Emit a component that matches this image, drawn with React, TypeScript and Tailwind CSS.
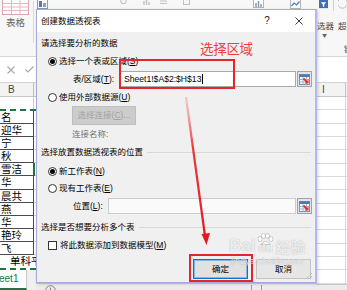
import React from "react";

function Radio({ checked }: { checked?: boolean }) {
  return (
    <span className="w-[9px] h-[9px] shrink-0 rounded-full border border-[#333] bg-white flex items-center justify-center">
      {checked && <span className="w-[5px] h-[5px] rounded-full bg-black" />}
    </span>
  );
}

function RangeBtn() {
  return (
    <div className="w-[15px] h-[16px] shrink-0 border border-[#a3a3a3] bg-[#e4e4e4] flex items-center justify-center">
      <svg width="11" height="11" viewBox="0 0 11 11">
        <rect x="0.5" y="0.5" width="10" height="10" fill="#fff" stroke="#6f8fb8" />
        <path d="M0.5 5.5H10.5M0.5 8H10.5M4 0.5V10.5M7.5 0.5V10.5" stroke="#9db3d1" strokeWidth="1" />
        <rect x="0.5" y="0.5" width="10" height="2.5" fill="#4a78b5" />
        <path d="M4.5 4.5 L8 8" stroke="#d9362b" strokeWidth="1.8" />
        <path d="M5.5 9.5 L9.5 9.5 L9.5 5.5 Z" fill="#d9362b" />
      </svg>
    </div>
  );
}

function SectionLabel({ text }: { text: string }) {
  return (
    <div className="flex items-center pl-[4px] pr-[4px]">
      <span className="leading-none whitespace-nowrap">{text}</span>
      <span className="flex-1 h-px bg-[#d9d9d9] ml-[4px]" />
    </div>
  );
}

function LeftStrip() {
  const names = ["名", "迎华", "宁", "秋", "雪洁", "华", "晨共", "燕", "华", "艳玲", "飞"];
  return (
    <div className="w-[36px] shrink-0 flex flex-col">
      <div className="h-[57px] shrink-0 bg-[#f7f7f7] border-b border-[#d6d6d6] flex">
        <div className="w-[31px] flex flex-col items-center">
          <svg width="27" height="15" viewBox="0 0 27 15">
            <rect x="0.5" y="-1" width="26" height="15.5" fill="#fff" stroke="#d6a7ae" />
            <path d="M0.5 3.5H26.5M0.5 7H26.5M0.5 10.5H26.5M9.5 -1V14.5M18 -1V14.5" stroke="#e0b9bf" />
          </svg>
          <span className="mt-[3px] text-[9.5px] leading-none text-[#666] font-['Noto_Sans_CJK_SC',sans-serif]">表格</span>
        </div>
        <div className="w-px h-[42px] bg-[#d8d8d8] ml-[2px] mt-[1px]" />
      </div>
      <div className="h-[26px] shrink-0 bg-white flex items-center border-b border-[#d4d4d4]">
        <svg className="ml-[7px]" width="8" height="8" viewBox="0 0 8 8">
          <path d="M0.5 0.5L7.5 7.5M7.5 0.5L0.5 7.5" stroke="#a8a8a8" strokeWidth="1.1" />
        </svg>
        <svg className="ml-[10px]" width="9" height="7" viewBox="0 0 9 7">
          <path d="M0.5 3.5L3 6L8.5 0.5" stroke="#a8a8a8" strokeWidth="1.1" fill="none" />
        </svg>
      </div>
      <div className="h-[14px] shrink-0 bg-[#f3f3f3] border-b border-[#c6c6c6] flex">
        <div className="w-[34px] border-r border-[#bdbdbd] flex items-center pl-[8px] text-[10px] leading-none text-[#444]">B</div>
      </div>
      <div className="h-[12px] shrink-0 bg-white flex">
        <div className="w-[34px] border-r border-[#c9c9c9]" />
      </div>
      <div className="shrink-0 bg-white border-y-2 border-dashed border-[#217346] flex flex-col">
        {names.map((n, i) => (
          <div key={i} className="h-[13.1px] flex">
            <div
              className={
                i === 4
                  ? "w-[35px] border-r-2 border-r-[#217346] border-b border-b-[#4a4a4a] pl-[1px] text-[10.5px] leading-[12px] text-black font-['Noto_Sans_CJK_SC',sans-serif] whitespace-nowrap"
                  : "w-[34px] border-r border-b border-[#4a4a4a] pl-[1px] text-[10.5px] leading-[12px] text-black font-['Noto_Sans_CJK_SC',sans-serif] whitespace-nowrap"
              }
            >
              {n}
            </div>
            <div className="flex-1 border-b border-[#d4d4d4]" />
          </div>
        ))}
        <div className="h-[13.1px] pl-[10px] text-[10.5px] leading-[12px] text-black font-['Noto_Sans_CJK_SC',sans-serif] whitespace-nowrap">
          单科平
        </div>
      </div>
      <div className="flex-1 flex bg-[#f0f0f0]">
        <div className="w-[27px] bg-white border-r border-[#c6c6c6] border-b-2 border-b-[#217346] flex items-center text-[10px] leading-none text-[#217346]">
          <span className="-ml-[1px]">eet1</span>
        </div>
      </div>
    </div>
  );
}

function MiddleStrip() {
  return (
    <div className="flex-1 flex flex-col">
      <div className="h-[57px] shrink-0 bg-[#f7f7f7] border-b border-[#d6d6d6] flex items-start">
        <svg className="ml-[1px]" width="11" height="9" viewBox="0 0 11 9">
          <rect x="0.5" y="-1" width="10" height="9.5" fill="#fff" stroke="#7a9cc6" />
          <rect x="2" y="1" width="3" height="6" fill="#4a7fc1" />
          <rect x="6" y="3" width="3" height="4" fill="#9a9a9a" />
        </svg>
        <svg className="ml-[72px]" width="7" height="5" viewBox="0 0 7 5">
          <circle cx="3.5" cy="1" r="2.8" fill="none" stroke="#bdbdbd" />
        </svg>
        <svg className="ml-[16px]" width="7" height="5" viewBox="0 0 7 5">
          <path d="M1 5V1M3.5 5V0M6 5V2" stroke="#c2c2c2" strokeWidth="1.4" />
        </svg>
        <svg className="ml-[10px]" width="7" height="5" viewBox="0 0 7 5">
          <path d="M0 1H7M0 3.5H7" stroke="#c2c2c2" strokeWidth="1.2" />
        </svg>
        <svg className="ml-[16px]" width="7" height="5" viewBox="0 0 7 5">
          <rect x="0.5" y="-1" width="6" height="5.5" fill="none" stroke="#c2c2c2" />
        </svg>
        <svg className="ml-[63px]" width="11" height="8" viewBox="0 0 11 8">
          <rect x="0.5" y="-1" width="10" height="8.5" fill="#fff" stroke="#b5b5b5" />
          <path d="M3 7V3M5.5 7V1M8 7V4" stroke="#8c9bb0" strokeWidth="1.5" />
        </svg>
        <svg className="ml-[26px]" width="11" height="9" viewBox="0 0 11 9">
          <rect x="0.5" y="-1" width="10" height="9.5" fill="#fff" stroke="#b5b5b5" />
          <path d="M1.5 6L4 3L6.5 5L9.5 1.5" stroke="#3c7dc4" strokeWidth="1.2" fill="none" />
        </svg>
      </div>
      <div className="h-[26px] shrink-0 bg-white border-b border-[#d4d4d4]" />
      <div className="h-[14px] shrink-0 bg-[#f3f3f3] border-b border-[#c6c6c6]" />
      <div className="flex-1 bg-white" />
      <div className="h-[7px] shrink-0 bg-[#ececec] border-t border-[#cfcfcf] flex items-start">
        <svg className="ml-[9px] mt-[1px]" width="11" height="6" viewBox="0 0 11 6">
          <circle cx="5.5" cy="5.5" r="4.8" fill="none" stroke="#777" strokeWidth="0.9" />
          <path d="M5.5 2.5V6" stroke="#777" strokeWidth="0.9" />
        </svg>
        <span className="ml-[195px] mt-[1px] w-px h-[5px] bg-[#9a9a9a]" />
        <span className="ml-[9px] mt-[1px] w-px h-[5px] bg-[#9a9a9a]" />
      </div>
    </div>
  );
}

function RightStrip() {
  const rows = Array.from({ length: 14 });
  return (
    <div className="w-[31px] shrink-0 flex flex-col overflow-hidden">
      <div className="h-[57px] shrink-0 bg-[#f7f7f7] border-b border-[#d6d6d6] flex flex-col font-['Noto_Sans_CJK_SC',sans-serif]">
        <div className="h-[11px] flex items-start">
          <svg className="ml-[3px]" width="10" height="9" viewBox="0 0 10 9">
            <rect x="0" y="-1" width="10" height="9.5" fill="#3f6fb0" />
            <path d="M2 2H8L5.8 4.5V7.5L4.2 6.5V4.5Z" fill="#fff" />
          </svg>
          <span className="ml-[5px] w-px h-[11px] bg-[#d0d0d0]" />
          <svg className="ml-[4px]" width="10" height="10" viewBox="0 0 10 10">
            <circle cx="5" cy="3" r="5.5" fill="none" stroke="#b7b7b7" />
          </svg>
        </div>
        <div className="h-[10px] mt-[9px] flex items-center text-[8.5px] leading-none text-[#444] whitespace-nowrap">
          <span className="ml-[1px]">选器</span>
          <span className="ml-[4px]">超</span>
        </div>
        <div className="ml-[6px] mt-[2px] text-[5px] leading-none text-[#666]">▼</div>
        <div className="ml-[28px] mt-[7px] text-[8.5px] leading-none text-[#555] whitespace-nowrap">链接</div>
      </div>
      <div className="h-[26px] shrink-0 bg-white border-b border-[#d4d4d4]" />
      <div className="h-[14px] shrink-0 bg-[#f3f3f3] border-b border-[#c6c6c6] flex">
        <div className="w-[30px] border-r border-[#c6c6c6] flex items-center pl-[6px] text-[10px] leading-none text-[#444]">I</div>
      </div>
      {rows.map((_, i) => (
        <div key={i} className="h-[13.33px] shrink-0 bg-white flex border-b border-[#dadada]">
          <div className="w-[30px] border-r border-[#dadada]" />
        </div>
      ))}
      <div className="flex-1 bg-[#ececec] border-t border-[#c6c6c6]" />
    </div>
  );
}

function Dialog() {
  return (
    <div className="absolute left-[36px] top-[9px] w-[281px] h-[274px] border border-[#a9a9d9] border-r-2 border-r-[#b7b7e8] bg-[#f0f0f0] flex flex-col text-[8.5px] text-black shadow-[1px_1px_3px_rgba(0,0,0,0.18)]">
      <div className="h-[22px] shrink-0 bg-white flex items-center pl-[4px]">
        <span className="leading-none">创建数据透视表</span>
        <span className="ml-auto w-[10px] text-center text-[10px] leading-none text-[#222]">?</span>
        <svg className="ml-[23px] mr-[12px]" width="8" height="8" viewBox="0 0 8 8">
          <path d="M0.5 0.5L7.5 7.5M7.5 0.5L0.5 7.5" stroke="#222" strokeWidth="0.9" />
        </svg>
      </div>

      <div className="h-[22px] shrink-0 flex items-center pl-[4px]">
        <span className="leading-none">请选择要分析的数据</span>
      </div>
      <div className="h-[14px] shrink-0 flex items-center">
        <span className="ml-[11px]"><Radio checked /></span>
        <span className="ml-[2px] leading-none">选择一个表或区域(<span className="underline">S</span>)</span>
      </div>
      <div className="h-[22px] shrink-0 flex items-center">
        <span className="ml-[36px] w-[47px] leading-none whitespace-nowrap">表/区域(<span className="underline">T</span>):</span>
        <div className="w-[176px] h-[16px] bg-white border border-[#a9a9a9] flex items-center pl-[3px] font-['Liberation_Sans',sans-serif] text-[8.6px] leading-none">
          <span>Sheet1!$A$2:$H$13</span>
          <span className="ml-[1px] w-px h-[10px] bg-black" />
        </div>
        <span className="ml-[1px]"><RangeBtn /></span>
      </div>
      <div className="h-[14px] shrink-0 flex items-center">
        <span className="ml-[11px]"><Radio /></span>
        <span className="ml-[2px] leading-none">使用外部数据源(<span className="underline">U</span>)</span>
      </div>
      <div className="h-[23px] shrink-0 flex items-center">
        <div className="ml-[35px] w-[64px] h-[19px] bg-[#cccccc] border border-[#bfbfbf] flex items-center justify-center leading-none text-[#a2a2a2]">
          选择连接(<span className="underline">C</span>)...
        </div>
      </div>
      <div className="h-[14px] shrink-0 flex items-center">
        <span className="ml-[35px] leading-none text-[#707070]">连接名称:</span>
      </div>
      <div className="h-[23px] shrink-0 flex items-center">
        <div className="flex-1"><SectionLabel text="选择放置数据透视表的位置" /></div>
      </div>
      <div className="h-[14px] shrink-0 flex items-center">
        <span className="ml-[11px]"><Radio checked /></span>
        <span className="ml-[2px] leading-none">新工作表(<span className="underline">N</span>)</span>
      </div>
      <div className="h-[20px] shrink-0 flex items-center">
        <span className="ml-[11px]"><Radio /></span>
        <span className="ml-[2px] leading-none">现有工作表(<span className="underline">E</span>)</span>
      </div>
      <div className="h-[16px] shrink-0 flex items-center">
        <span className="ml-[36px] w-[35px] leading-none whitespace-nowrap">位置(<span className="underline">L</span>):</span>
        <div className="w-[188px] h-[16px] bg-[#fafafa] border border-[#cccccc]" />
        <span className="ml-[1px]"><RangeBtn /></span>
      </div>
      <div className="h-[26px] shrink-0 flex items-center">
        <div className="flex-1"><SectionLabel text="选择是否想要分析多个表" /></div>
      </div>
      <div className="h-[10px] shrink-0 flex items-center">
        <span className="ml-[11px] w-[9px] h-[9px] bg-white border border-[#333]" />
        <span className="ml-[3px] leading-none">将此数据添加到数据模型(<span className="underline">M</span>)</span>
      </div>
      <div className="h-[9px] shrink-0" />
      <div className="h-[20px] shrink-0 flex">
        <div className="ml-[156px] w-[55px] h-[20px] bg-[#e1e1e1] border border-[#0078d7] shadow-[inset_0_0_0_1px_#7fb7ea] flex items-center justify-center leading-none">
          确定
        </div>
        <div className="ml-[8px] w-[55px] h-[20px] bg-[#e6e6e6] border border-[#c4c4c4] flex items-center justify-center leading-none">
          取消
        </div>
      </div>
      <svg className="absolute right-[2px] bottom-[2px]" width="8" height="8" viewBox="0 0 8 8">
        <path d="M7 1L1 7M7 4L4 7M7 6.5L6.5 7" stroke="#a0a0a0" strokeWidth="0.9" strokeDasharray="1 1" />
      </svg>
    </div>
  );
}

function Annotations() {
  return (
    <>
      <div className="absolute left-[200px] top-[42px] text-[13.5px] leading-none text-[#f03c3c] font-['Noto_Sans_CJK_SC',sans-serif] whitespace-nowrap tracking-[-0.3px]">
        选择区域
      </div>
      <div className="absolute left-[119px] top-[59px] w-[116px] h-[30px] border-2 border-[#e3252c]" />
      <div className="absolute left-[189px] top-[254px] w-[64px] h-[28px] border-2 border-[#e3252c]" />
      <svg className="absolute left-0 top-0 pointer-events-none" width="347" height="290" viewBox="0 0 347 290">
        <defs>
          <linearGradient id="arr" x1="0" y1="97" x2="0" y2="240" gradientUnits="userSpaceOnUse">
            <stop offset="0" stopColor="#f4a0a0" stopOpacity="0.5" />
            <stop offset="0.35" stopColor="#ec3a3a" />
            <stop offset="1" stopColor="#e3191e" />
          </linearGradient>
        </defs>
        <path d="M186 97 L205 236" stroke="url(#arr)" strokeWidth="2.2" fill="none" />
        <path d="M201.5 234 L210 233 L206.5 245 Z" fill="#e3191e" />
      </svg>
      <div className="absolute left-[229px] top-[233px] flex flex-col items-start pointer-events-none">
        <div className="flex items-end">
          <span className="text-[17px] leading-none font-bold text-white/80 font-['Liberation_Sans',sans-serif] [text-shadow:0_0_1px_rgba(0,0,0,0.35)]">Bai</span>
          <div className="flex flex-col items-center ml-[1px]">
            <svg width="18" height="12" viewBox="0 0 18 12">
              <g fill="rgba(255,255,255,0.85)" stroke="rgba(0,0,0,0.22)" strokeWidth="0.8">
                <ellipse cx="4" cy="6" rx="2" ry="2.6" />
                <ellipse cx="7.5" cy="2.8" rx="2" ry="2.5" />
                <ellipse cx="11.5" cy="2.8" rx="2" ry="2.5" />
                <ellipse cx="15" cy="6" rx="2" ry="2.6" />
                <path d="M5 11.5 Q9.5 5 14 11.5 Z" />
              </g>
            </svg>
            <span className="-mt-[3px] text-[12px] leading-none font-bold text-white/80 font-['Liberation_Sans',sans-serif] [text-shadow:0_0_1px_rgba(0,0,0,0.35)]">du</span>
          </div>
          <span className="ml-[1px] text-[15px] leading-none font-bold text-white/80 font-['Noto_Sans_CJK_SC',sans-serif] [text-shadow:0_0_1px_rgba(0,0,0,0.35)]">经验</span>
        </div>
        <span className="mt-[3px] ml-[2px] text-[9px] leading-none text-white/80 font-['Liberation_Sans',sans-serif] [text-shadow:0_0_1px_rgba(0,0,0,0.35)]">jingyan.baidu.com</span>
      </div>
    </>
  );
}

export default function App() {
  return (
    <div className="relative w-[347px] h-[290px] overflow-hidden bg-white flex font-['Liberation_Sans','Noto_Sans_CJK_SC',sans-serif]">
      <LeftStrip />
      <MiddleStrip />
      <RightStrip />
      <Dialog />
      <Annotations />
    </div>
  );
}
